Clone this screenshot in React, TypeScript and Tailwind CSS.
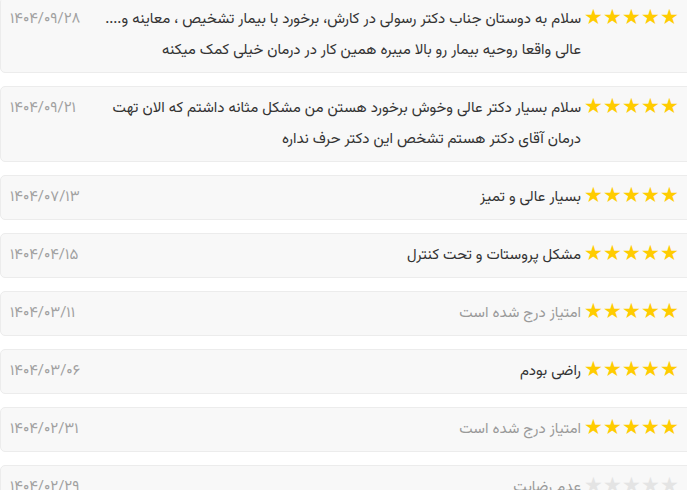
const reviews = [
  {
    stars: 5,
    text: "سلام به دوستان جناب دکتر رسولی در کارش، برخورد با بیمار تشخیص ، معاینه و.... عالی واقعا روحیه بیمار رو بالا میبره همین کار در درمان خیلی کمک میکنه",
    date: "۱۴۰۴/۰۹/۲۸",
  },
  {
    stars: 5,
    text: "سلام بسیار دکتر عالی وخوش برخورد هستن من مشکل مثانه داشتم که الان تهت درمان آقای دکتر هستم تشخص این دکتر حرف نداره",
    date: "۱۴۰۴/۰۹/۲۱",
  },
  { stars: 5, text: "بسیار عالی و تمیز", date: "۱۴۰۴/۰۷/۱۳" },
  { stars: 5, text: "مشکل پروستات و تحت کنترل", date: "۱۴۰۴/۰۴/۱۵" },
  { stars: 5, text: "", date: "۱۴۰۴/۰۳/۱۱" },
  { stars: 5, text: "راضی بودم", date: "۱۴۰۴/۰۳/۰۶" },
  { stars: 5, text: "", date: "۱۴۰۴/۰۲/۳۱" },
  { stars: 0, text: "عدم رضایت", date: "۱۴۰۴/۰۲/۲۹", muted: true },
];

function Stars({ count }: { count: number }) {
  return (
    <span className="shrink-0 whitespace-nowrap text-[20.5px] leading-[31px]">
      {[0, 1, 2, 3, 4].map((i) => (
        <span key={i} className={i < count ? "text-[#ffcc00]" : "text-[#e4e4e4]"}>
          ★
        </span>
      ))}
    </span>
  );
}

export default function App() {
  return (
    <div
      className="h-[490px] w-[687px] overflow-hidden bg-white"
      style={{ fontFamily: "Vazirmatn, sans-serif" }}
    >
      <div className="-mt-[3px] flex w-[697px] flex-col gap-[13px]">
        {reviews.map((r, idx) => (
          <div
            key={idx}
            dir="rtl"
            className="flex items-start gap-[3px] rounded-[5px] border border-[#ececec] bg-[#f8f8f8] py-1.5 pl-[9px] pr-[17px]"
          >
            <Stars count={r.stars} />
            <p
              className={
                r.text && !r.muted
                  ? "flex-1 text-[15px] leading-[31px] text-[#333333]"
                  : "flex-1 text-[15px] leading-[31px] text-[#9a9a9a]"
              }
            >
              {r.text || "امتیاز درج شده است"}
            </p>
            <span className="mr-2.5 shrink-0 text-[15px] leading-[31px] text-[#a0a0a0]">{r.date}</span>
          </div>
        ))}
      </div>
    </div>
  );
}
